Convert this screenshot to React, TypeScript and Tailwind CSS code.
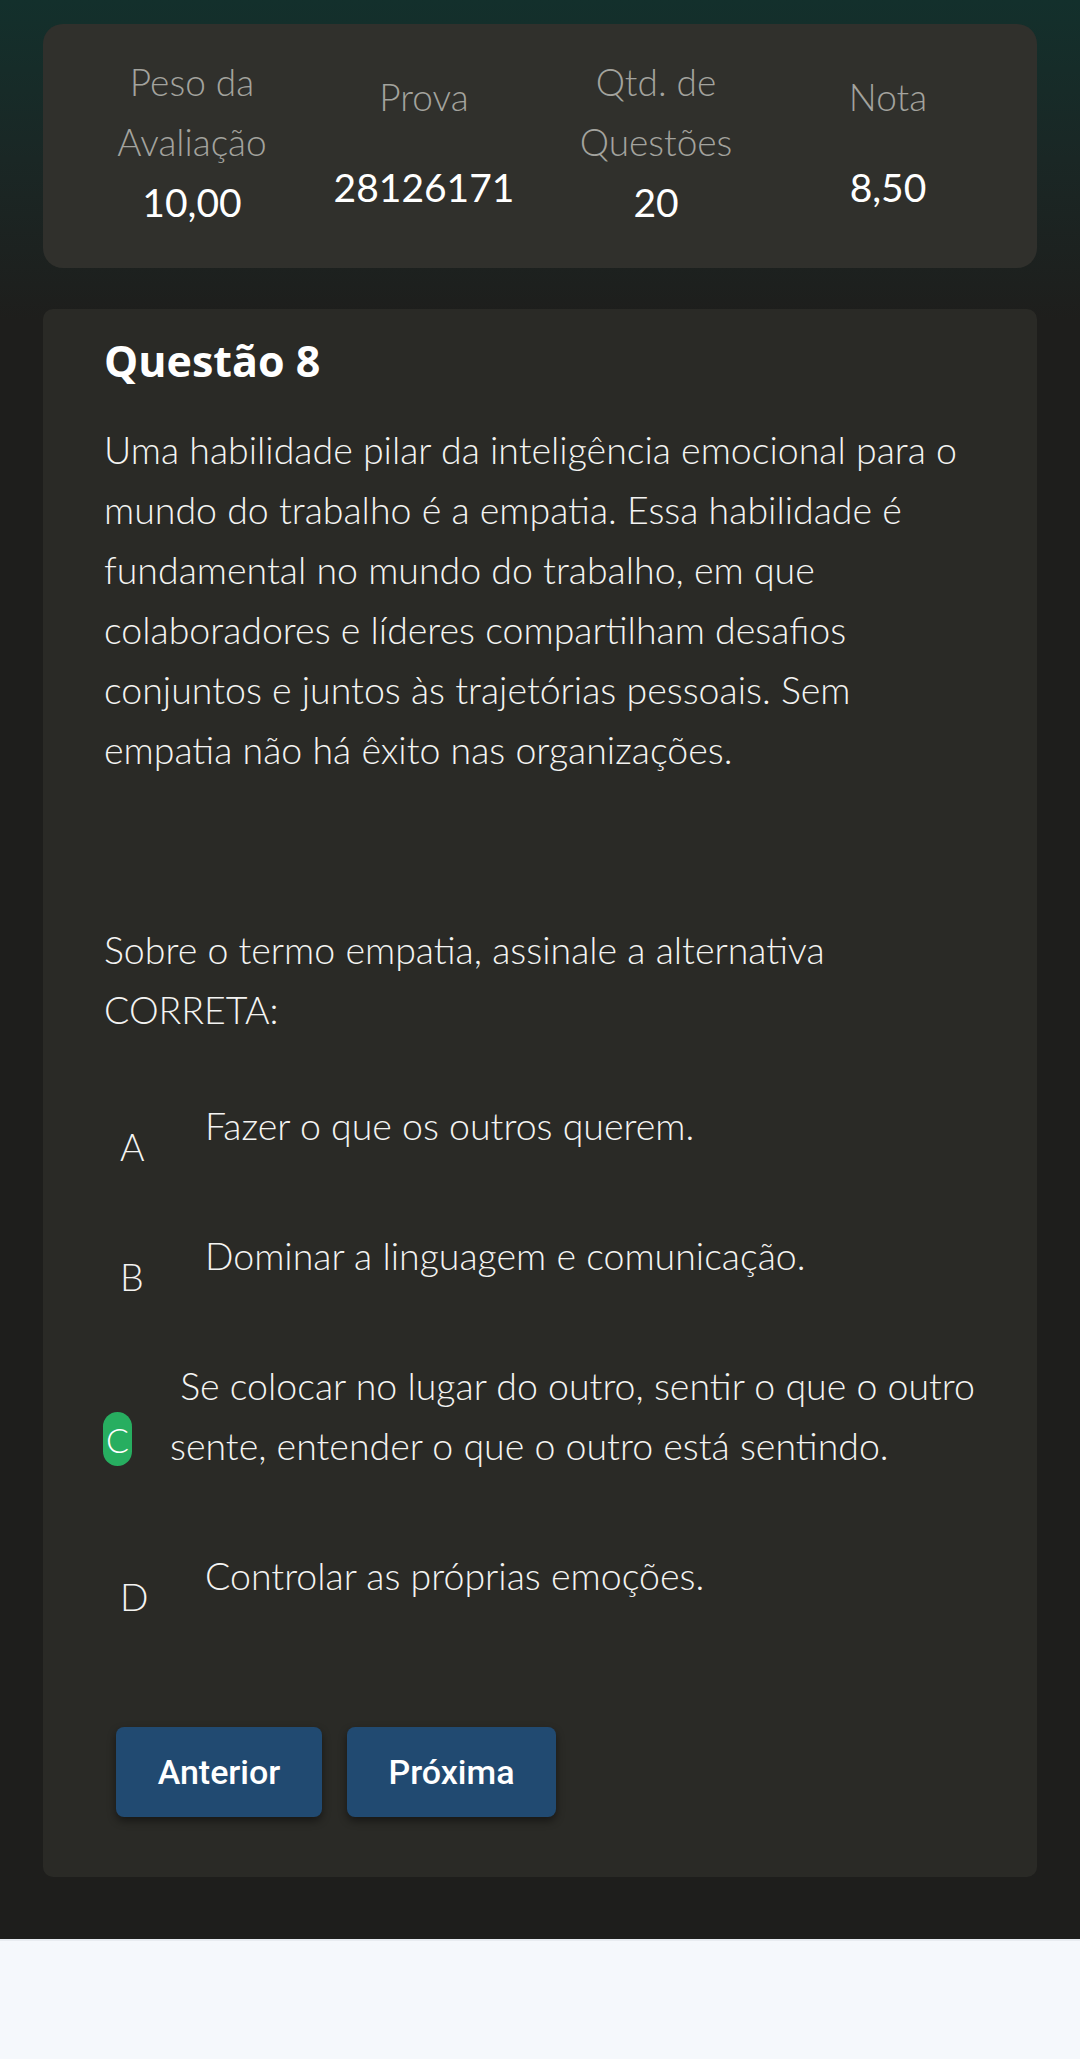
import { useState } from "react";

const stats = [
  { label: ["Peso da", "Avaliação"], value: "10,00" },
  { label: ["Prova"], value: "28126171" },
  { label: ["Qtd. de", "Questões"], value: "20" },
  { label: ["Nota"], value: "8,50" },
];

const options = [
  { letter: "A", text: "Fazer o que os outros querem." },
  { letter: "B", text: "Dominar a linguagem e comunicação." },
  {
    letter: "C",
    text: "\u00a0Se colocar no lugar do outro, sentir o que o outro sente, entender o que o outro está sentindo.",
  },
  { letter: "D", text: "Controlar as próprias emoções." },
];

const App = () => {
  const [selected] = useState("C");

  return (
    <div className="min-h-screen bg-[#f5f8fc] font-['Lato',sans-serif]">
      <div className="bg-[#1e1e1c] bg-[linear-gradient(180deg,#13302c_0px,#1a2725_160px,#1e1e1c_320px)] px-[43px] pt-[24px] pb-[62px] border-b-2 border-[#e8ecf1]">
        <div className="h-[244px] rounded-[20px] bg-[#30302c] px-[33px] pb-[8px] grid grid-cols-4 items-center">
          {stats.map((s) => (
            <div key={s.value} className="flex flex-col items-center text-center">
              <div className="text-[37px] leading-[60px] font-light text-[#a3a39e]">
                {s.label.map((l) => (
                  <div key={l}>{l}</div>
                ))}
              </div>
              <div
                className={`text-[39px] leading-[60px] text-white ${
                  s.label.length === 1 ? "mt-[30px]" : ""
                }`}
              >
                {s.value}
              </div>
            </div>
          ))}
        </div>

        <div className="mt-[41px] rounded-[10px] bg-[#2a2a26] px-[61px] pt-[26px] pb-[60px]">
          <h2 className="font-['Open_Sans',sans-serif] text-[43px] leading-[52px] font-bold text-white">
            Questão 8
          </h2>

          <p className="mt-[33px] text-[37.5px] leading-[60px] font-light text-[#f4f4f2]">
            Uma habilidade pilar da inteligência emocional para o mundo do trabalho é a empatia. Essa
            habilidade é fundamental no mundo do trabalho, em que colaboradores e líderes compartilham
            desafios conjuntos e juntos às trajetórias pessoais. Sem empatia não há êxito nas
            organizações.
          </p>

          <p className="mt-[140px] text-[37.5px] leading-[60px] font-light text-[#f4f4f2] pr-[80px]">
            Sobre o termo empatia, assinale a alternativa CORRETA:
          </p>

          <div className="mt-[56px] flex flex-col gap-[70px]">
            {options.map((o) =>
              o.letter === selected ? (
                <div key={o.letter} className="flex items-start">
                  <span className="mt-[56px] -ml-px flex h-[54px] w-[29px] shrink-0 items-center justify-center rounded-full bg-[#27ae60] text-[34px] font-light text-white">
                    {o.letter}
                  </span>
                  <span className="ml-[38px] text-[37.5px] leading-[60px] font-light text-[#f4f4f2]">
                    {o.text}
                  </span>
                </div>
              ) : (
                <div key={o.letter} className="flex items-start">
                  <span className="mt-[21px] -mb-[21px] w-[101px] shrink-0 pl-[16px] text-[37.5px] leading-[60px] font-light text-[#f4f4f2]">
                    {o.letter}
                  </span>
                  <span className="text-[37.5px] leading-[60px] font-light text-[#f4f4f2]">{o.text}</span>
                </div>
              )
            )}
          </div>

          <div className="mt-[121px] ml-[12px] flex gap-[25px] font-['Roboto',sans-serif]">
            <button className="h-[90px] w-[206px] rounded-[8px] bg-[#214a71] text-[34px] font-medium text-white shadow-[0_4px_8px_rgba(0,0,0,0.45)]">
              Anterior
            </button>
            <button className="h-[90px] w-[209px] rounded-[8px] bg-[#214a71] text-[34px] font-medium text-white shadow-[0_4px_8px_rgba(0,0,0,0.45)]">
              Próxima
            </button>
          </div>
        </div>
      </div>
    </div>
  );
};

export default App;
